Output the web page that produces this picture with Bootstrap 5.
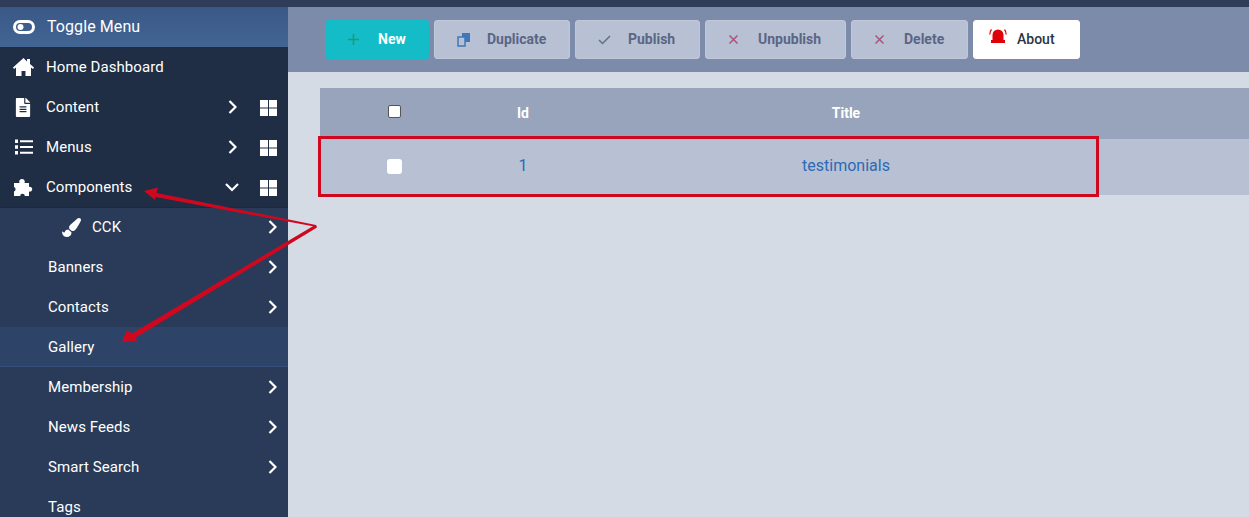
<!DOCTYPE html>
<html lang="en">
<head>
<meta charset="UTF-8">
<title>Gallery</title>
<link href="https://cdn.jsdelivr.net/npm/bootstrap@5.3.3/dist/css/bootstrap.min.css" rel="stylesheet">
<style>
html, body { height: 517px; overflow: hidden; }
body { background: #d5dbe5; font-family: Roboto, "Liberation Sans", sans-serif; position: relative; }
.top-strip { height: 7px; background: #2f3d5a; }
.layout { height: 510px; }
.side-nav { width: 288px; flex: 0 0 288px; background: #293b59; color: #fff; overflow: hidden; }
.side-row { height: 40px; font-size: 15px; letter-spacing: .08px; color: #fff; }
.side-row svg { fill: #fff; }
.toggle-row { background: linear-gradient(#3a5886, #426594); font-size: 16px; padding-left: 13px; }
.top-group { background: #1f2e45; }
.slot-icon { width: 20px; margin-left: 13px; margin-right: 13px; flex: none; }
.slot-sub { width: 48px; flex: none; }
.chev-main { margin-left: auto; margin-right: 23px; }
.chev-open { margin-right: 21px; }
.tile { margin-right: 11px; margin-top: 2px; }
.chev-sub { margin-left: auto; margin-right: 11px; }
.row-active { background: #2d4468; box-shadow: inset 0 -1px 0 #35507a; }
.sub-first { box-shadow: inset 0 1px 0 #1a2940; }
.tool-bar { height: 65px; background: #7c8ba9; padding-left: 37px; gap: 5px; }
.tool-btn { height: 39px; padding: 0 0 0 22px; border: 1px solid #c0c8d8; border-radius: 3px; background: #b8c0d3; color: #5a6685; font-size: 14px; font-weight: 700; }
.tool-btn:disabled { opacity: 1; background: #b8c0d3; color: #5a6685; border-color: #c0c8d8; }
.tool-slot { width: 30px; flex: none; }
.tool-new { width: 104px; background: #14bcc8; border-color: #14bcc8; color: #fff; }
.tool-new:hover { background: #14bcc8; color: #fff; }
.tool-dup { width: 136px; }
.tool-pub { width: 125px; }
.tool-unpub { width: 141px; }
.tool-del { width: 117px; }
.tool-about { width: 107px; background: #fff; border-color: #fff; color: #2b3446; padding-left: 15px; font-weight: 500; }
.tool-about:hover { background: #fff; color: #2b3446; }
.tool-slot-about { width: 28px; flex: none; }
.tool-wrap { padding: 16px 0 0 32px; }
.data-grid { table-layout: fixed; width: 929px; border-collapse: collapse; margin: 0; }
.data-grid th { height: 51px; background: #98a4bb; color: #fff; font-size: 14px; font-weight: 700; text-align: center; vertical-align: middle; padding: 0; border: 0; }
.data-grid td { height: 56px; background: #b8c0d3; text-align: center; vertical-align: middle; padding: 0 0 2px; border: 0; font-size: 16px; }
.data-grid a { color: #2a6bb5; text-decoration: none; }
.check-head { width: 13px; height: 13px; background: #fff; border: 1px solid #555; border-radius: 2px; display: inline-block; margin-bottom: 6px; vertical-align: middle; }
.check-row { width: 15px; height: 15px; background: #fff; border-radius: 3px; display: inline-block; vertical-align: middle; }
.note-box { position: absolute; left: 318px; top: 136px; width: 781px; height: 61px; border: 3px solid #d0081f; }
.note-arrows { position: absolute; left: 0; top: 0; pointer-events: none; }
</style>
</head>
<body>
<div class="top-strip"></div>
<div class="layout d-flex">
  <nav class="side-nav">
    <div class="side-row toggle-row d-flex align-items-center">
      <svg width="22" height="14" viewBox="0 0 22 14" class="flex-shrink-0" style="margin-right:12px"><path fill-rule="evenodd" d="M7 0h8a7 7 0 0 1 0 14H7A7 7 0 0 1 7 0zm0 3a4 4 0 0 0 0 8h8a4 4 0 0 0 0-8z"/><circle cx="7.500" cy="7" r="3"/></svg>
      <span>Toggle Menu</span>
    </div>
    <div class="top-group">
      <div class="side-row d-flex align-items-center">
        <span class="slot-icon"><svg width="21" height="18" viewBox="0 0 21 18" class="d-block"><path d="M10.500 0L0 9.500l1 1.500 2-1.500V18h5.500v-5h4v5H18V9.500l2 1.500 1-1.500L17 6V1h-3v2.500z"/></svg></span>
        <span>Home Dashboard</span>
      </div>
      <div class="side-row d-flex align-items-center">
        <span class="slot-icon"><svg width="20" height="19" viewBox="0 0 384 512" class="d-block"><path d="M224 136V0H24C10.7 0 0 10.7 0 24v464c0 13.3 10.7 24 24 24h336c13.3 0 24-10.7 24-24V160H248c-13.2 0-24-10.8-24-24zm64 236c0 6.6-5.4 12-12 12H108c-6.6 0-12-5.4-12-12v-8c0-6.6 5.4-12 12-12h168c6.6 0 12 5.4 12 12v8zm0-64c0 6.6-5.4 12-12 12H108c-6.6 0-12-5.4-12-12v-8c0-6.6 5.4-12 12-12h168c6.6 0 12 5.4 12 12v8zm0-72v8c0 6.6-5.4 12-12 12H108c-6.6 0-12-5.4-12-12v-8c0-6.6 5.4-12 12-12h168c6.6 0 12 5.4 12 12zm96-114.1v6.1H256V0h6.100c6.400 0 12.500 2.500 17 7l97.900 98c4.500 4.500 7 10.600 7 16.900z"/></svg></span>
        <span>Content</span>
        <svg class="chev-main" width="9" height="14" viewBox="0 0 9 14"><path d="M1.500 1l6 6-6 6" fill="none" stroke="#fff" stroke-width="2.200"/></svg>
        <svg class="tile" width="17" height="16" viewBox="0 0 17 16"><path d="M0 0h8v7.500H0zM9 0h8v7.500H9zM0 8.500h8V16H0zM9 8.500h8V16H9z"/></svg>
      </div>
      <div class="side-row d-flex align-items-center">
        <span class="slot-icon"><svg width="20" height="16" viewBox="0 0 20 16" class="d-block"><path d="M2 0.500h3v3.500H2zM2 6.200h3v3.500H2zM2 12h3v3.500H2zM7 1.300h13v2H7zM7 7h13v2H7zM7 12.800h13v2H7z"/></svg></span>
        <span>Menus</span>
        <svg class="chev-main" width="9" height="14" viewBox="0 0 9 14"><path d="M1.500 1l6 6-6 6" fill="none" stroke="#fff" stroke-width="2.200"/></svg>
        <svg class="tile" width="17" height="16" viewBox="0 0 17 16"><path d="M0 0h8v7.500H0zM9 0h8v7.500H9zM0 8.500h8V16H0zM9 8.500h8V16H9z"/></svg>
      </div>
      <div class="side-row d-flex align-items-center">
        <span class="slot-icon"><svg width="20" height="19" viewBox="0 0 20 19" class="d-block"><path fill-rule="evenodd" d="M1 5h5.500a2.800 2.800 0 1 1 5 0H16v4a2.400 2.400 0 1 1 0 4.500V18h-4.200a2.300 2.300 0 0 0-4.600 0H1v-4.500a2.400 2.400 0 0 0 0-4.500z"/></svg></span>
        <span>Components</span>
        <svg class="chev-main chev-open" width="14" height="9" viewBox="0 0 14 9"><path d="M1 1l6 6 6-6" fill="none" stroke="#fff" stroke-width="2.200"/></svg>
        <svg class="tile" width="17" height="16" viewBox="0 0 17 16"><path d="M0 0h8v7.500H0zM9 0h8v7.500H9zM0 8.500h8V16H0zM9 8.500h8V16H9z"/></svg>
      </div>
    </div>
    <div class="side-row sub-first d-flex align-items-center">
      <svg class="flex-shrink-0" style="margin-left:62px;margin-right:11px" width="19" height="19" viewBox="0 0 512 512"><path d="M167.020 309.340c-40.120 2.580-76.530 17.860-97.190 72.300-2.350 6.210-8 9.980-14.590 9.980-11.110 0-45.460-27.670-55.250-34.350C0 439.620 37.930 512 128 512c75.860 0 128-43.770 128-120.190 0-3.110-.65-6.080-.97-9.130l-88.010-73.340zM457.890 0c-15.160 0-29.370 6.710-40.210 16.450C213.270 199.050 192 203.340 192 257.090c0 13.700 3.250 26.760 8.730 38.700l63.820 53.180c7.210 1.800 14.640 3.030 22.390 3.030 62.110 0 98.110-45.470 211.160-256.460 7.380-14.350 13.900-29.850 13.900-45.990C512 20.640 486 0 457.890 0z"/></svg>
      <span>CCK</span>
      <svg class="chev-sub" width="9" height="14" viewBox="0 0 9 14"><path d="M1.500 1l6 6-6 6" fill="none" stroke="#fff" stroke-width="2.200"/></svg>
    </div>
    <div class="side-row d-flex align-items-center"><span class="slot-sub"></span><span>Banners</span><svg class="chev-sub" width="9" height="14" viewBox="0 0 9 14"><path d="M1.500 1l6 6-6 6" fill="none" stroke="#fff" stroke-width="2.200"/></svg></div>
    <div class="side-row d-flex align-items-center"><span class="slot-sub"></span><span>Contacts</span><svg class="chev-sub" width="9" height="14" viewBox="0 0 9 14"><path d="M1.500 1l6 6-6 6" fill="none" stroke="#fff" stroke-width="2.200"/></svg></div>
    <div class="side-row row-active d-flex align-items-center"><span class="slot-sub"></span><span>Gallery</span></div>
    <div class="side-row d-flex align-items-center"><span class="slot-sub"></span><span>Membership</span><svg class="chev-sub" width="9" height="14" viewBox="0 0 9 14"><path d="M1.500 1l6 6-6 6" fill="none" stroke="#fff" stroke-width="2.200"/></svg></div>
    <div class="side-row d-flex align-items-center"><span class="slot-sub"></span><span>News Feeds</span><svg class="chev-sub" width="9" height="14" viewBox="0 0 9 14"><path d="M1.500 1l6 6-6 6" fill="none" stroke="#fff" stroke-width="2.200"/></svg></div>
    <div class="side-row d-flex align-items-center"><span class="slot-sub"></span><span>Smart Search</span><svg class="chev-sub" width="9" height="14" viewBox="0 0 9 14"><path d="M1.500 1l6 6-6 6" fill="none" stroke="#fff" stroke-width="2.200"/></svg></div>
    <div class="side-row d-flex align-items-center"><span class="slot-sub"></span><span>Tags</span></div>
  </nav>
  <main class="flex-grow-1">
    <div class="tool-bar d-flex align-items-center">
      <button class="btn tool-btn tool-new d-flex align-items-center"><span class="tool-slot"><svg width="11" height="11" viewBox="0 0 11 11" class="d-block"><path d="M5.500 0v11M0 5.500h11" stroke="#1f9a6b" stroke-width="1.500"/></svg></span>New</button>
      <button class="btn tool-btn tool-dup d-flex align-items-center" disabled><span class="tool-slot"><svg width="14" height="14" viewBox="0 0 14 14" class="d-block"><path d="M5 0h8v9H5z" fill="#3f78b8"/><path d="M1 4h7v9H1z" fill="#b8c0d3" stroke="#3f78b8" stroke-width="1.500"/></svg></span>Duplicate</button>
      <button class="btn tool-btn tool-pub d-flex align-items-center" disabled><span class="tool-slot"><svg width="13" height="10" viewBox="0 0 13 10" class="d-block"><path d="M1 5l3.500 3.500L12 1" fill="none" stroke="#5e7384" stroke-width="1.500"/></svg></span>Publish</button>
      <button class="btn tool-btn tool-unpub d-flex align-items-center" disabled><span class="tool-slot"><svg width="11" height="11" viewBox="0 0 11 11" class="d-block"><path d="M1.500 1.500l8 8M9.500 1.500l-8 8" stroke="#a8547c" stroke-width="1.500"/></svg></span>Unpublish</button>
      <button class="btn tool-btn tool-del d-flex align-items-center" disabled><span class="tool-slot"><svg width="11" height="11" viewBox="0 0 11 11" class="d-block"><path d="M1.500 1.500l8 8M9.500 1.500l-8 8" stroke="#a8547c" stroke-width="1.500"/></svg></span>Delete</button>
      <button class="btn tool-btn tool-about d-flex align-items-center"><span class="tool-slot-about"><svg width="18" height="17" viewBox="0 0 18 17" class="d-block" style="margin-top:-8px"><path d="M3.500 13V8a5.500 5.500 0 0 1 11 0v5zM2 13h14v3H2z" fill="#e0000a"/><path d="M2.500 2.500Q.8 4.500.8 7.500M15.500 2.500q1.700 2 1.700 5" fill="none" stroke="#e0000a" stroke-width="1.200"/></svg></span>About</button>
    </div>
    <div class="tool-wrap">
      <table class="data-grid">
        <colgroup><col style="width:148px"><col style="width:110px"><col style="width:536px"><col></colgroup>
        <thead>
          <tr><th><span class="check-head"></span></th><th>Id</th><th>Title</th><th></th></tr>
        </thead>
        <tbody>
          <tr><td><span class="check-row"></span></td><td><a href="#">1</a></td><td><a href="#">testimonials</a></td><td></td></tr>
        </tbody>
      </table>
    </div>
  </main>
</div>
<div class="note-box"></div>
<svg class="note-arrows" width="1249" height="517" viewBox="0 0 1249 517">
  <path d="M144 191L158 187.500L156.500 193L316 225L317 227L155.500 197L155 200z" fill="#d0081f"/>
  <path d="M122 342L127 330L132 333.500L315 225L317 227.500L135 338L138 340.500z" fill="#d0081f"/>
</svg>
</body>
</html>
